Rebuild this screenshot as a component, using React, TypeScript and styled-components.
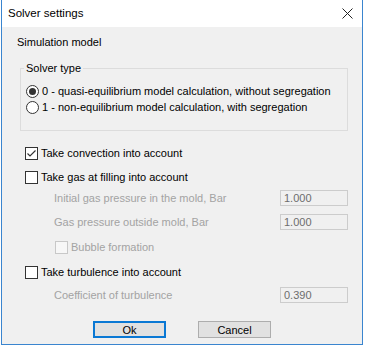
import React from "react";
import styled, { createGlobalStyle } from "styled-components";

const Global = createGlobalStyle`
  html, body { margin: 0; padding: 0; background: #ffffff; }
  body { font-family: "Liberation Sans", Arial, sans-serif; font-size: 11px; color: #000; }
`;

const Window = styled.div`
  margin-left: 1px;
  width: 362px;
  height: 345px;
  box-sizing: border-box;
  border: 1px solid #3a85cf;
  border-top: none;
  display: flex;
  flex-direction: column;
  background: #f0f0f0;
`;

const TitleBar = styled.div`
  height: 27px;
  background: #ffffff;
  display: flex;
  align-items: center;
  justify-content: space-between;
  padding: 0 9px 0 6px;
  flex-shrink: 0;
`;

const Title = styled.span`
  font-family: "Liberation Sans", Arial, sans-serif;
  font-size: 11.5px;
  color: #000;
  margin-top: -1px;
`;

const Body = styled.div`
  display: flex;
  flex-direction: column;
  flex: 1;
`;

const SectionLabel = styled.div`
  margin: 8px 0 0 15px;
  line-height: 14px;
`;

const Group = styled.div`
  position: relative;
  margin: 19px 0 0 18px;
  width: 328px;
  box-sizing: border-box;
  border: 1px solid #dcdcdc;
  padding: 14px 0 15px 5px;
  display: flex;
  flex-direction: column;
`;

const Legend = styled.span`
  position: absolute;
  top: -8px;
  left: 3px;
  padding: 0 2px;
  background: #f0f0f0;
  line-height: 14px;
`;

const OptionRow = styled.label<{ $top?: number; $indent?: number; $disabled?: boolean }>`
  display: flex;
  align-items: center;
  height: 16px;
  margin-top: ${(p) => p.$top ?? 0}px;
  margin-left: ${(p) => p.$indent ?? 0}px;
  color: ${(p) => (p.$disabled ? "#a3a3a3" : "#000")};
  gap: 3px;
`;

const Radio = styled.span<{ $checked?: boolean }>`
  width: 13px;
  height: 13px;
  box-sizing: border-box;
  border: 1px solid #333333;
  border-radius: 50%;
  background: #ffffff;
  display: flex;
  align-items: center;
  justify-content: center;
  &::after {
    content: "";
    width: 7px;
    height: 7px;
    border-radius: 50%;
    background: ${(p) => (p.$checked ? "#333333" : "transparent")};
  }
`;

const Check = styled.span<{ $disabled?: boolean }>`
  width: 13px;
  height: 13px;
  box-sizing: border-box;
  border: 1px solid ${(p) => (p.$disabled ? "#c8c8c8" : "#333333")};
  background: ${(p) => (p.$disabled ? "#f7f7f7" : "#ffffff")};
  display: flex;
  align-items: center;
  justify-content: center;
`;

const FieldRow = styled.div<{ $top: number }>`
  display: flex;
  align-items: center;
  justify-content: space-between;
  height: 16px;
  margin: ${(p) => p.$top}px 0 0 52px;
  width: 294px;
  color: #a3a3a3;
`;

const Field = styled.div`
  width: 68px;
  height: 16px;
  box-sizing: border-box;
  border: 1px solid #cccccc;
  background: #f0f0f0;
  color: #6d6d6d;
  padding-left: 3px;
  line-height: 14px;
`;

const ButtonRow = styled.div`
  display: flex;
  justify-content: center;
  gap: 32px;
  margin-top: 18px;
`;

const Button = styled.div<{ $default?: boolean }>`
  width: 73px;
  height: 17px;
  box-sizing: border-box;
  background: #e1e1e1;
  border: ${(p) => (p.$default ? "2px solid #0a78d4" : "1px solid #adadad")};
  display: flex;
  align-items: center;
  justify-content: center;
`;

const CheckBox = ({ checked, disabled }: { checked?: boolean; disabled?: boolean }) => (
  <Check $disabled={disabled}>
    {checked && (
      <svg width="11" height="11" viewBox="0 0 11 11">
        <path d="M1.5 5.5 L4 8 L9.5 2.5" fill="none" stroke="#333" strokeWidth="1.2" />
      </svg>
    )}
  </Check>
);

export default function App() {
  return (
    <>
      <Global />
      <Window>
        <TitleBar>
          <Title>Solver settings</Title>
          <svg width="11" height="11" viewBox="0 0 11 11">
            <path d="M0.5 0.5 L10.5 10.5 M10.5 0.5 L0.5 10.5" stroke="#222" strokeWidth="1" />
          </svg>
        </TitleBar>
        <Body>
          <SectionLabel>Simulation model</SectionLabel>
          <Group>
            <Legend>Solver type</Legend>
            <OptionRow>
              <Radio $checked />
              0 - quasi-equilibrium model calculation, without segregation
            </OptionRow>
            <OptionRow>
              <Radio />
              1 - non-equilibrium model calculation, with segregation
            </OptionRow>
          </Group>
          <OptionRow $top={14} $indent={23}>
            <CheckBox checked />
            Take convection into account
          </OptionRow>
          <OptionRow $top={8} $indent={23}>
            <CheckBox />
            Take gas at filling into account
          </OptionRow>
          <FieldRow $top={5}>
            Initial gas pressure in the mold, Bar
            <Field>1.000</Field>
          </FieldRow>
          <FieldRow $top={8}>
            Gas pressure outside mold, Bar
            <Field>1.000</Field>
          </FieldRow>
          <OptionRow $top={9} $indent={53} $disabled>
            <CheckBox disabled />
            Bubble formation
          </OptionRow>
          <OptionRow $top={9} $indent={23}>
            <CheckBox />
            Take turbulence into account
          </OptionRow>
          <FieldRow $top={7}>
            Coefficient of turbulence
            <Field>0.390</Field>
          </FieldRow>
          <ButtonRow>
            <Button $default>Ok</Button>
            <Button>Cancel</Button>
          </ButtonRow>
        </Body>
      </Window>
    </>
  );
}
